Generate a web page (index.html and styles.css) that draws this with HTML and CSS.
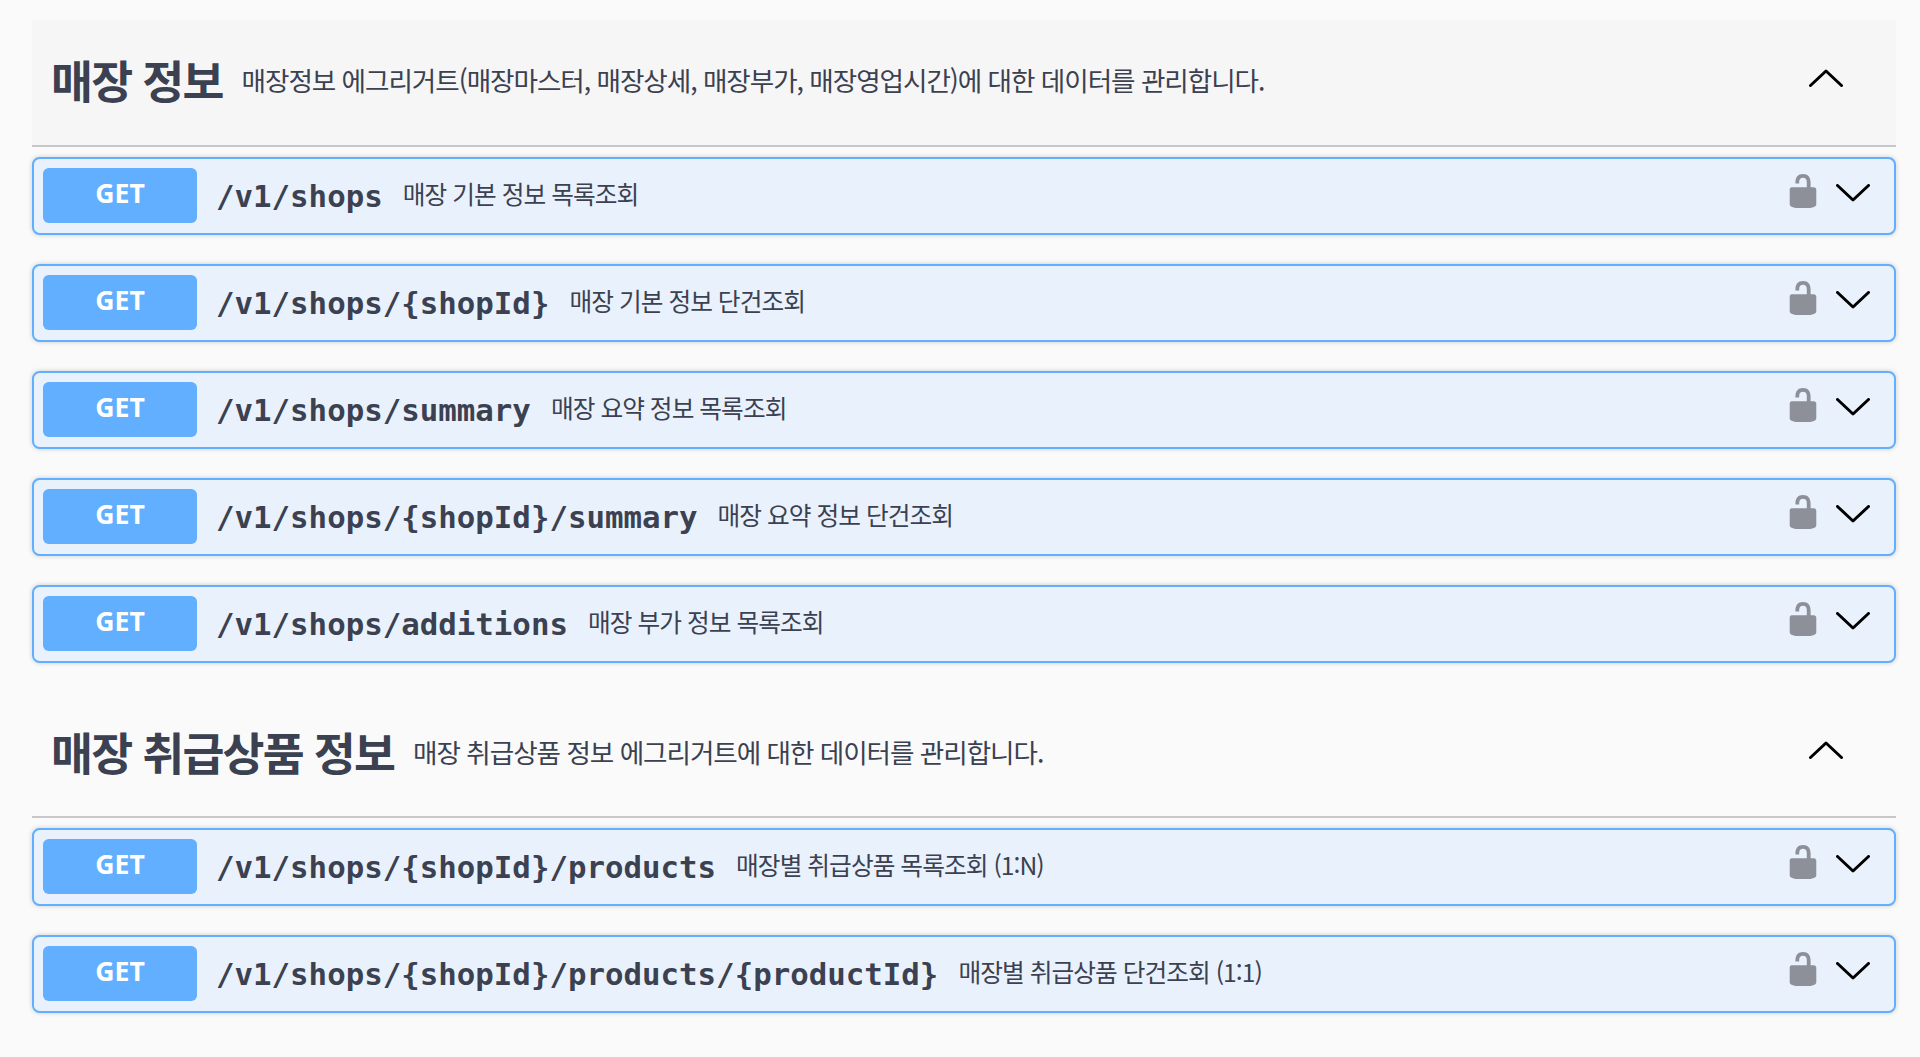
FILE: index.html
```html
<!DOCTYPE html>
<html lang="ko">
<head>
<meta charset="utf-8">
<title>Swagger</title>
<link rel="stylesheet" href="styles.css">
</head>
<body>
<svg class="defs" width="0" height="0" aria-hidden="true">
  <symbol id="lock" viewBox="0 0 20 20"><path d="M15.8 8H14V5.6C14 2.703 12.665 1 10 1 7.334 1 6 2.703 6 5.6V6h2v-.801C8 3.754 8.797 3 10 3c1.203 0 2 .754 2 2.199V8H4c-.553 0-1 .646-1 1.199V17c0 .549.428 1.139.951 1.307l1.197.387C5.672 18.861 6.55 19 7.1 19h5.8c.549 0 1.428-.139 1.951-.307l1.196-.387c.524-.167.953-.757.953-1.306V9.199C17 8.646 16.352 8 15.8 8z"/></symbol>
  <symbol id="down" viewBox="0 0 34 18"><polyline points="1.5,1.5 17,16 32.5,1.5"/></symbol>
  <symbol id="up" viewBox="0 0 34 18"><polyline points="1.5,16.5 17,2 32.5,16.5"/></symbol>
</svg>
<main class="page">
  <section class="tag-section tag-first">
    <header class="tag">
      <h3 class="tag-title">매장 정보</h3>
      <p class="tag-desc">매장정보 에그리거트(매장마스터, 매장상세, 매장부가, 매장영업시간)에 대한 데이터를 관리합니다.</p>
      <svg class="tag-arrow"><use href="#up"/></svg>
    </header>
    <div class="op"><span class="method">GET</span><span class="path">/v1/shops</span><span class="summary">매장 기본 정보 목록조회</span><svg class="lock"><use href="#lock"/></svg><svg class="arrow"><use href="#down"/></svg></div>
    <div class="op"><span class="method">GET</span><span class="path">/v1/shops/{shopId}</span><span class="summary">매장 기본 정보 단건조회</span><svg class="lock"><use href="#lock"/></svg><svg class="arrow"><use href="#down"/></svg></div>
    <div class="op"><span class="method">GET</span><span class="path">/v1/shops/summary</span><span class="summary">매장 요약 정보 목록조회</span><svg class="lock"><use href="#lock"/></svg><svg class="arrow"><use href="#down"/></svg></div>
    <div class="op"><span class="method">GET</span><span class="path">/v1/shops/{shopId}/summary</span><span class="summary">매장 요약 정보 단건조회</span><svg class="lock"><use href="#lock"/></svg><svg class="arrow"><use href="#down"/></svg></div>
    <div class="op"><span class="method">GET</span><span class="path">/v1/shops/additions</span><span class="summary">매장 부가 정보 목록조회</span><svg class="lock"><use href="#lock"/></svg><svg class="arrow"><use href="#down"/></svg></div>
  </section>
  <section class="tag-section">
    <header class="tag">
      <h3 class="tag-title">매장 취급상품 정보</h3>
      <p class="tag-desc">매장 취급상품 정보 에그리거트에 대한 데이터를 관리합니다.</p>
      <svg class="tag-arrow"><use href="#up"/></svg>
    </header>
    <div class="op"><span class="method">GET</span><span class="path">/v1/shops/{shopId}/products</span><span class="summary">매장별 취급상품 목록조회 (1:N)</span><svg class="lock"><use href="#lock"/></svg><svg class="arrow"><use href="#down"/></svg></div>
    <div class="op"><span class="method">GET</span><span class="path">/v1/shops/{shopId}/products/{productId}</span><span class="summary">매장별 취급상품 단건조회 (1:1)</span><svg class="lock"><use href="#lock"/></svg><svg class="arrow"><use href="#down"/></svg></div>
  </section>
</main>
</body>
</html>
```

FILE: styles.css
```css
* { box-sizing: border-box; }
html, body { margin: 0; height: 100%; }
body {
  background: #fafafa;
  color: #3b4151;
  font-family: "Noto Sans", "Noto Sans CJK KR", sans-serif;
  overflow: hidden;
}
.defs { position: absolute; }
.page { padding: 20px 24.5px 0 31.5px; }
.tag {
  display: flex;
  align-items: center;
  height: 126.7px;
  padding: 0 19.5px 5px;
  border-bottom: 2px solid #c8c8cb;
  margin-bottom: 10.5px;
}
.tag-first .tag { background: #f6f6f6; }
.tag-title {
  margin: 0 19px 0 0;
  font-family: "Noto Sans CJK KR", sans-serif;
  font-feature-settings: "palt";
  font-size: 45.6px;
  font-weight: 700;
  letter-spacing: -1.8px;
  line-height: 1.2;
}
.tag-desc {
  margin: 0;
  flex: 1;
  font-family: "Noto Sans CJK KR", sans-serif;
  font-feature-settings: "palt";
  font-size: 26.6px;
  font-weight: 400;
  letter-spacing: -1.05px;
}
.tag-arrow {
  width: 34px;
  height: 18px;
  margin-right: 33.5px;
  margin-bottom: 3px;
  fill: none;
  stroke: #000;
  stroke-width: 3;
  stroke-linecap: round;
  stroke-linejoin: round;
}
.op {
  display: flex;
  align-items: center;
  height: 78px;
  padding: 0 23.5px 0 9.5px;
  margin-bottom: 29px;
  background: #e9f2fc;
  border: 2px solid #61affe;
  border-radius: 7.6px;
  box-shadow: 0 0 5px rgba(0, 0, 0, 0.19);
}
.op:last-child { margin-bottom: 28px; }
.method {
  flex: none;
  width: 154px;
  height: 55px;
  margin-bottom: 1px;
  line-height: 51px;
  text-align: center;
  background: #61affe;
  color: #fff;
  border-radius: 5.7px;
  font-size: 26.6px;
  font-weight: 700;
}
.path {
  margin-left: 19px;
  padding-right: 20px;
  font-family: "DejaVu Sans Mono", monospace;
  font-size: 30.77px;
  font-weight: 700;
  line-height: 1;
}
.summary {
  flex: 1;
  font-family: "Noto Sans CJK KR", sans-serif;
  font-feature-settings: "palt";
  font-size: 24.7px;
  letter-spacing: -0.95px;
  margin-bottom: 7px;
}
.lock {
  width: 38px;
  height: 38px;
  fill: #8d9098;
  margin-bottom: 11px;
}
.arrow {
  width: 34px;
  height: 18px;
  margin-left: 14px;
  margin-bottom: 6px;
  fill: none;
  stroke: #000;
  stroke-width: 3;
  stroke-linecap: round;
  stroke-linejoin: round;
}
```
